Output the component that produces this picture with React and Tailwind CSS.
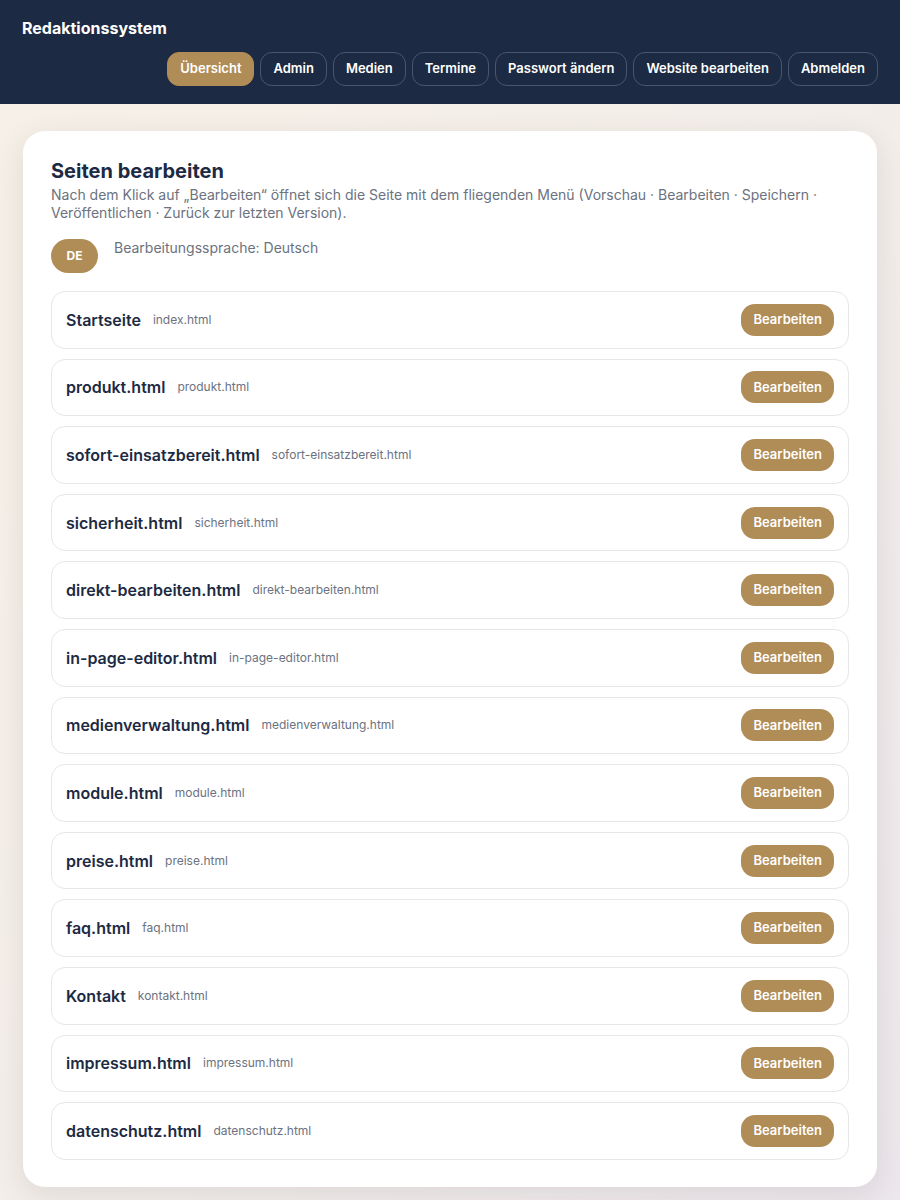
import React from 'react';

const navItems = ['Übersicht', 'Admin', 'Medien', 'Termine', 'Passwort ändern', 'Website bearbeiten', 'Abmelden'];

const pages = [
  ['Startseite', 'index.html'],
  ['produkt.html', 'produkt.html'],
  ['sofort-einsatzbereit.html', 'sofort-einsatzbereit.html'],
  ['sicherheit.html', 'sicherheit.html'],
  ['direkt-bearbeiten.html', 'direkt-bearbeiten.html'],
  ['in-page-editor.html', 'in-page-editor.html'],
  ['medienverwaltung.html', 'medienverwaltung.html'],
  ['module.html', 'module.html'],
  ['preise.html', 'preise.html'],
  ['faq.html', 'faq.html'],
  ['Kontakt', 'kontakt.html'],
  ['impressum.html', 'impressum.html'],
  ['datenschutz.html', 'datenschutz.html'],
];

const App = () => {
  return (
    <div className="min-h-[1200px] bg-gradient-to-br from-[#f6f0e7] via-[#f3eee9] to-[#ece7ec] font-['Inter',sans-serif]">
      <header className="bg-[#1d2a43] px-[22px] pt-4 pb-[18px]">
        <h1 className="text-white text-[16px] leading-6 font-bold">Redaktionssystem</h1>
        <nav className="mt-3 flex justify-end gap-1.5">
          {navItems.map((item, i) => (
            <button
              key={item}
              className={`h-[34px] px-3 rounded-xl text-[13px] font-semibold text-white border ${
                i === 0 ? 'bg-[#b08c57] border-[#b08c57]' : 'border-[#4b566c] bg-transparent'
              }`}
            >
              {item}
            </button>
          ))}
        </nav>
      </header>

      <main className="px-[23px] pt-[27px] pb-3">
        <div className="bg-white rounded-[22px] shadow-[0_8px_30px_rgba(60,40,50,0.10)] px-[28px] pt-[26px] pb-[27px]">
          <h2 className="text-[20px] leading-7 font-bold text-[#1d2a43]">Seiten bearbeiten</h2>
          <p className="mt-[1px] text-[14px] leading-[18px] text-[#6b7280]">
            Nach dem Klick auf „Bearbeiten“ öffnet sich die Seite mit dem fliegenden Menü (Vorschau · Bearbeiten · Speichern · Veröffentlichen · Zurück zur letzten Version).
          </p>
          <div className="mt-[17px] flex items-start gap-4">
            <span className="w-[47px] h-[34px] rounded-full bg-[#b08c57] text-white text-[12px] font-bold flex items-center justify-center">DE</span>
            <span className="text-[14px] leading-[18px] text-[#6b7280]">Bearbeitungssprache: Deutsch</span>
          </div>

          <div className="mt-[18px] flex flex-col gap-[10px]">
            {pages.map(([title, file]) => (
              <div key={file} className="flex items-center justify-between border border-[#e5e7eb] rounded-[14px] px-[14px] py-[11.8px]">
                <div className="flex items-center gap-3">
                  <span className="text-[16px] font-semibold text-[#1d2a43]">{title}</span>
                  <span className="text-[12px] text-[#6b7280]">{file}</span>
                </div>
                <button className="h-[32px] px-3 rounded-[14px] bg-[#b08c57] text-white text-[13px] font-semibold">Bearbeiten</button>
              </div>
            ))}
          </div>
        </div>
      </main>
    </div>
  );
};

export default App;
